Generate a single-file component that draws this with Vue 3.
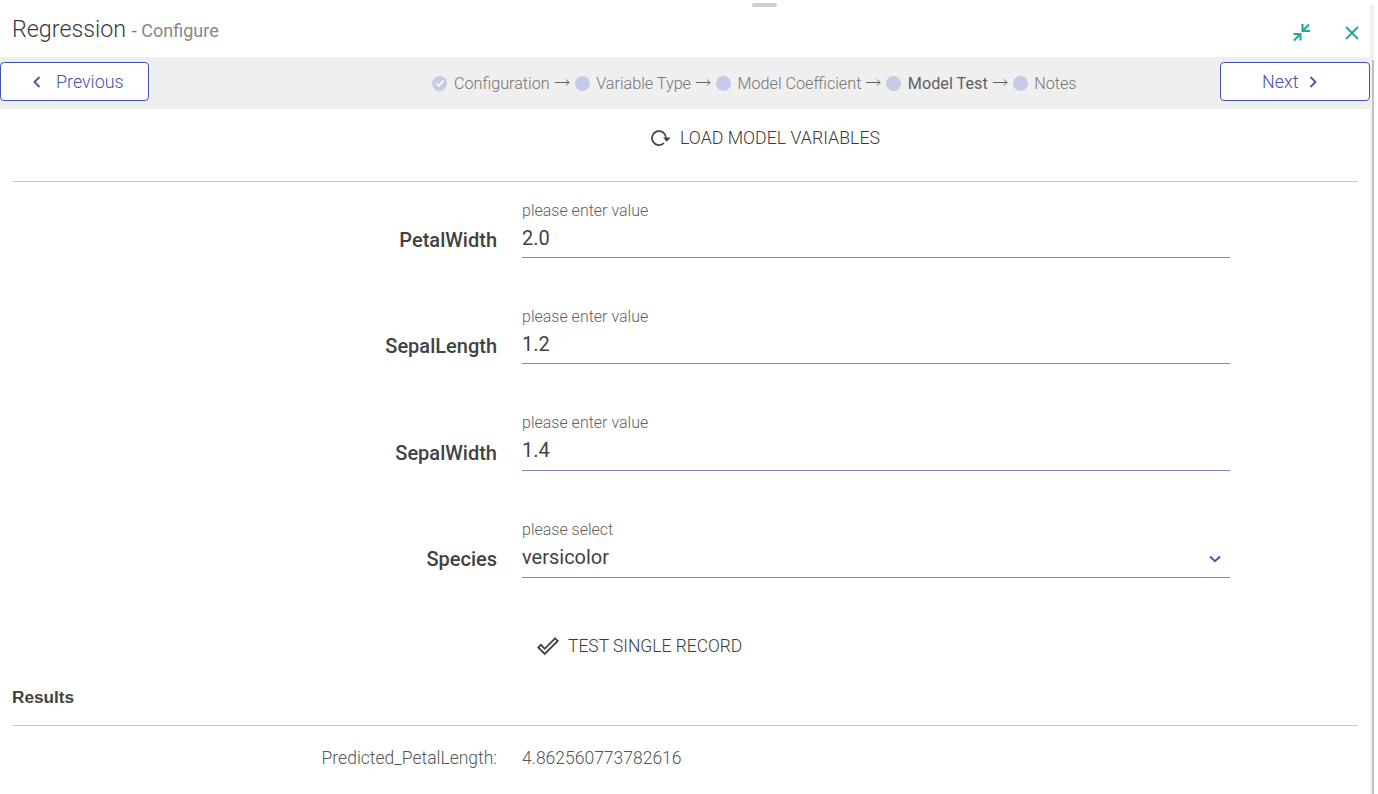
<script setup>
const steps = [
  { name: 'Configuration', done: true },
  { name: 'Variable Type' },
  { name: 'Model Coefficient' },
  { name: 'Model Test', active: true },
  { name: 'Notes' }
]
const fields = [
  { label: 'PetalWidth', hint: 'please enter value', value: '2.0' },
  { label: 'SepalLength', hint: 'please enter value', value: '1.2' },
  { label: 'SepalWidth', hint: 'please enter value', value: '1.4' },
  { label: 'Species', hint: 'please select', value: 'versicolor', select: true }
]
</script>

<template>
  <div class="page">
    <div class="main">
      <div class="handle-row"><span class="handle"></span></div>
      <header class="head">
        <div class="title">Regression <span class="sub"><span class="dash">-</span> Configure</span></div>
        <div class="head-icons">
          <svg width="20" height="20" viewBox="0 0 20 20" fill="none" stroke="#26a69a" stroke-width="2.1">
            <path d="M2 17.5 L8 11.5" /><path d="M1.5 11 H8.5 V17.5" />
            <path d="M17 1.5 L11 7.5" /><path d="M10.5 1 V8 H18" />
          </svg>
          <svg width="16" height="16" viewBox="0 0 16 16" fill="none" stroke="#26a69a" stroke-width="1.9">
            <path d="M2 2 L14 14 M14 2 L2 14" />
          </svg>
        </div>
      </header>
      <nav class="stepbar">
        <button class="nav-btn prev">
          <svg width="10" height="14" viewBox="0 0 10 14" fill="none" stroke="#3f51b5" stroke-width="1.8"><path d="M7.5 2 L2.5 7 L7.5 12" /></svg>
          <span>Previous</span>
        </button>
        <div class="steps">
          <template v-for="(s, i) in steps" :key="s.name">
            <svg v-if="i" class="arrow" width="15" height="9" viewBox="0 0 15 9" fill="none" stroke="#616161" stroke-width="1"><path d="M0 4.5 H14 M11 1.5 L14 4.5 L11 7.5" /></svg>
            <span class="dot">
              <svg v-if="s.done" width="10" height="10" viewBox="0 0 10 10" fill="none" stroke="#fff" stroke-width="1.6"><path d="M1.5 5.5 L4 8 L8.5 2.5" /></svg>
            </span>
            <span class="step" :class="{ active: s.active }">{{ s.name }}</span>
          </template>
        </div>
        <button class="nav-btn next">
          <span>Next</span>
          <svg width="10" height="14" viewBox="0 0 10 14" fill="none" stroke="#3f51b5" stroke-width="1.8"><path d="M2.5 2 L7.5 7 L2.5 12" /></svg>
        </button>
      </nav>
      <section class="content">
        <div class="action load">
          <svg width="20" height="20" viewBox="0 0 20 20" fill="none" stroke="#424242" stroke-width="1.7">
            <path d="M15 9.5 A7 7 0 1 0 13 15" />
            <path d="M12 9.5 H19.6 L15.8 13.8 Z" fill="#424242" stroke="none" />
          </svg>
          <span>LOAD MODEL VARIABLES</span>
        </div>
        <hr class="rule" />
        <div class="form">
          <div v-for="f in fields" :key="f.label" class="row">
            <label class="label">{{ f.label }}</label>
            <div class="control">
              <div class="hint">{{ f.hint }}</div>
              <div class="value">
                <span class="val-text">{{ f.value }}</span>
                <svg v-if="f.select" width="12" height="8" viewBox="0 0 12 8" fill="none" stroke="#3f51b5" stroke-width="1.8"><path d="M1 1.5 L6 6.2 L11 1.5" /></svg>
              </div>
            </div>
          </div>
        </div>
        <div class="action test">
          <svg width="22" height="22" viewBox="0 0 24 24" fill="#424242">
            <path d="M19.77 5.03l1.4 1.4L8.43 19.17l-5.6-5.6 1.4-1.4 4.2 4.2L19.77 5.03m0-2.83L8.43 13.54l-4.2-4.2L0 13.57 8.43 22 24 6.43 19.77 2.2z" />
          </svg>
          <span>TEST SINGLE RECORD</span>
        </div>
        <h3 class="results">Results</h3>
        <hr class="rule" />
        <div class="result-row">
          <span class="r-label">Predicted_PetalLength:</span>
          <span class="r-value">4.862560773782616</span>
        </div>
      </section>
    </div>
    <div class="scrollbar"><div class="thumb"></div></div>
  </div>
</template>

<style>
html, body { margin: 0; background: #fff; overflow: hidden; }
</style>

<style scoped>
.page {
  display: flex;
  height: 794px;
  width: 1378px;
  font-family: Roboto, "Liberation Sans", sans-serif;
  color: #424242;
  overflow: hidden;
  background: #fff;
}
.main { width: 1370px; flex: none; }
.handle-row { height: 0; display: flex; justify-content: center; padding-left: 159px; }
.handle { width: 25px; height: 4px; margin-top: 3px; border-radius: 2px; background: #cfcfcf; flex: none; }
.head {
  height: 57px;
  display: flex;
  align-items: center;
  justify-content: space-between;
  padding: 0 10px 0 12px;
  box-sizing: border-box;
}
.title { font-size: 23.3px; font-weight: 300; color: #3a3a3a; }
.sub { font-size: 18px; color: #888; font-weight: 400; }
.dash { color: #777; }
.head-icons { display: flex; align-items: center; gap: 32px; padding-top: 9px; }
.stepbar {
  height: 52px;
  background: #efefef;
  display: flex;
  align-items: center;
  justify-content: space-between;
}
.nav-btn {
  height: 39px;
  background: #fff;
  border: 1px solid #3f51b5;
  border-radius: 4px;
  color: #3f51b5;
  font-family: inherit;
  font-size: 17.9px;
  font-weight: 300;
  display: flex;
  align-items: center;
  justify-content: flex-start;
  margin-top: -3px;
  box-sizing: border-box;
}
.prev { width: 149px; gap: 14px; padding: 0 0 0 31px; }
.next { width: 150px; gap: 10px; padding: 0 0 0 41px; }
.steps { display: flex; align-items: center; color: #757575; font-size: 16.2px; font-weight: 300; margin-left: 140px; }
.dot {
  width: 15px; height: 15px; border-radius: 50%; background: #c5cae9;
  display: inline-flex; align-items: center; justify-content: center; margin-right: 6.5px;
}
.arrow { margin: -1px 5px 0; flex: none; }
.step.active { font-weight: 400; color: #616161; }
.content { padding: 0 12px; }
.action {
  display: flex;
  align-items: center;
  font-weight: 300;
  color: #3a3a3a;
}
.load { height: 58px; padding-left: 639px; gap: 9px; box-sizing: border-box; font-size: 17.75px; }
.rule { border: 0; border-top: 1px solid #c8cad4; margin: 0; }
.load + .rule { margin-top: 14px; }
.form { padding-top: 18px; }
.row { display: flex; align-items: flex-end; margin-bottom: 49px; }
.row:first-child { margin-bottom: 48px; }
.row:last-child { margin-bottom: 0; }
.row .label {
  width: 485px;
  text-align: right;
  font-size: 20px;
  font-weight: 500;
  color: #424242;
  padding-bottom: 6px;
  flex: none;
}
.row:last-child .label { padding-bottom: 7px; }
.control { margin-left: 25px; width: 708px; border-bottom: 1px solid #7986cb; }
.hint { font-size: 16px; font-weight: 300; color: #616161; line-height: 20px; }
.row:nth-child(-n+2) .hint { padding-top: 1px; margin-bottom: -1px; }
.value {
  font-size: 20px; font-weight: 400; color: #424242; line-height: 37px; height: 37px;
  display: flex; align-items: center; justify-content: space-between; padding-right: 9px;
}
.row:nth-child(n+3) .val-text { margin-top: -2px; }
.test { height: 40px; margin-top: 48px; padding-left: 525px; gap: 9px; font-size: 17.45px; }
.results {
  font-family: "Liberation Sans", Arial, sans-serif;
  font-size: 17.2px; font-weight: 700; margin: 0; color: #424242; line-height: 20px;
  padding-top: 21px; padding-bottom: 18px;
}
.result-row { display: flex; height: 60px; padding-top: 22px; box-sizing: border-box; font-size: 17.5px; font-weight: 300; color: #555; line-height: 20px; }
.r-label { width: 485px; text-align: right; flex: none; }
.r-value { margin-left: 25px; }
.scrollbar { width: 4px; margin-top: 5px; background: #f1f1f1; padding-top: 55px; flex: none; box-sizing: border-box; height: 789px; }
.thumb { width: 2px; margin-left: 2px; height: 734px; background: #c1c1c1; }
</style>
